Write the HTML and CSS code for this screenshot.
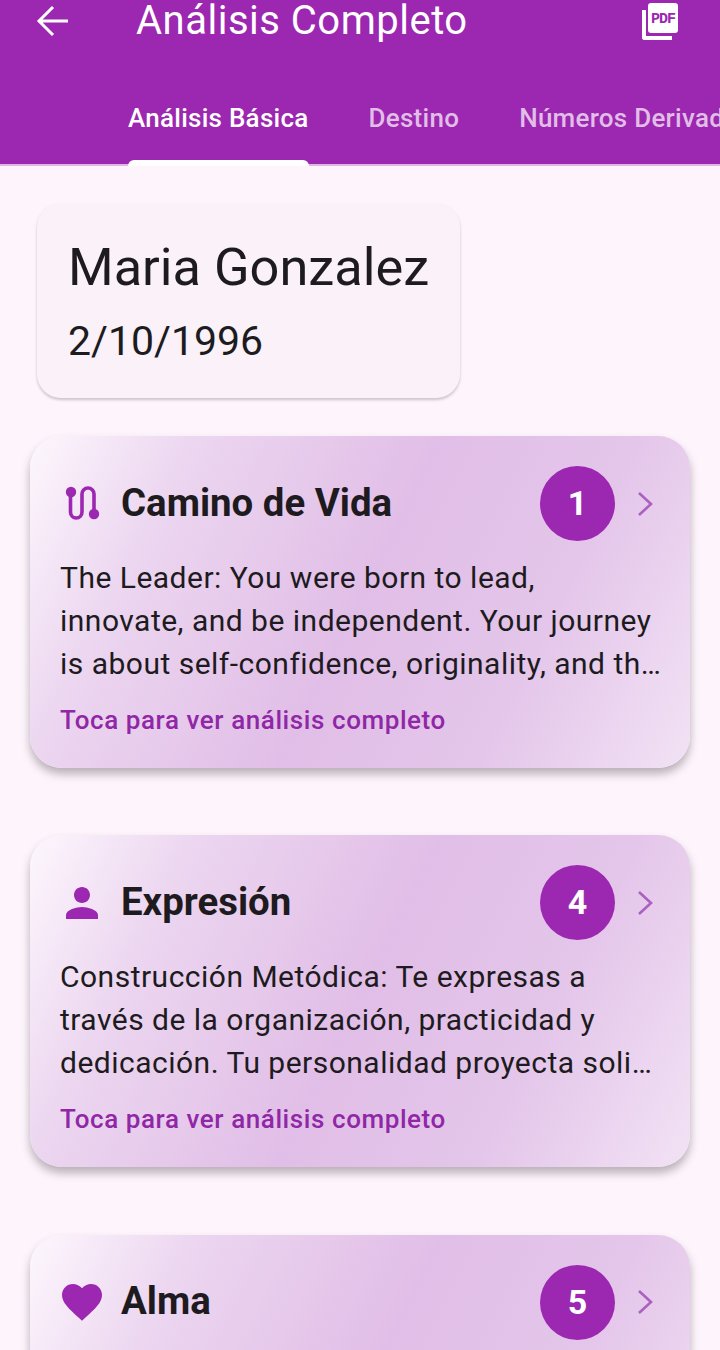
FILE: index.html
```html
<!DOCTYPE html>
<html lang="es">
<head>
<meta charset="utf-8">
<title>Análisis Completo</title>
<link rel="stylesheet" href="styles.css">
</head>
<body>
<header class="appbar">
  <div class="toolbar">
    <svg class="back" viewBox="0 0 24 24" width="48" height="48"><path d="M19.500 12H5M12 5l-7 7 7 7" fill="none" stroke="#fff" stroke-width="1.500"/></svg>
    <h1 class="title">Análisis Completo</h1>
    <div class="pdf">
      <span class="pdf-back"></span>
      <span class="pdf-front">PDF</span>
    </div>
  </div>
  <nav class="tabs">
    <span class="tab active">Análisis Básica</span>
    <span class="tab">Destino</span>
    <span class="tab">Números Derivados</span>
  </nav>
</header>
<main class="content">
  <section class="person">
    <div class="person-name">Maria Gonzalez</div>
    <div class="person-date">2/10/1996</div>
  </section>
  <article class="card">
    <div class="card-head">
      <svg class="icon" viewBox="0 0 48 48" width="48" height="48"><path d="M12.500 12v20a5.750 6 0 0 0 11.500 0V14a6 6 0 0 1 12 0v20" fill="none" stroke="#9c27b0" stroke-width="3.600"/><circle cx="13" cy="12" r="5.200" fill="#9c27b0"/><circle cx="36" cy="34" r="5.200" fill="#9c27b0"/></svg>
      <h2 class="card-title">Camino de Vida</h2>
      <span class="badge">1</span>
      <svg class="chev" viewBox="0 0 16 26" width="16" height="26"><path d="M2 2l12 11L2 24" fill="none" stroke="#ab61bf" stroke-width="2.600"/></svg>
    </div>
    <p class="card-text">The Leader: You were born to lead, innovate, and be independent. Your journey is about self-confidence, originality, and th…</p>
    <div class="card-hint">Toca para ver análisis completo</div>
  </article>
  <article class="card">
    <div class="card-head">
      <svg class="icon" viewBox="0 0 24 24" width="48" height="48"><path d="M12 12c2.210 0 4-1.790 4-4s-1.790-4-4-4-4 1.790-4 4 1.790 4 4 4zm0 2c-2.670 0-8 1.340-8 4v2h16v-2c0-2.660-5.330-4-8-4z" fill="#9c27b0"/></svg>
      <h2 class="card-title">Expresión</h2>
      <span class="badge">4</span>
      <svg class="chev" viewBox="0 0 16 26" width="16" height="26"><path d="M2 2l12 11L2 24" fill="none" stroke="#ab61bf" stroke-width="2.600"/></svg>
    </div>
    <p class="card-text">Construcción Metódica: Te expresas a través de la organización, practicidad y dedicación. Tu personalidad proyecta soli…</p>
    <div class="card-hint">Toca para ver análisis completo</div>
  </article>
  <article class="card">
    <div class="card-head">
      <svg class="icon" viewBox="0 0 24 24" width="48" height="48"><path d="M12 21.350l-1.450-1.320C5.400 15.360 2 12.280 2 8.500 2 5.420 4.420 3 7.500 3c1.740 0 3.410.810 4.500 2.090C13.090 3.810 14.760 3 16.500 3 19.580 3 22 5.420 22 8.500c0 3.780-3.400 6.860-8.550 11.540L12 21.350z" fill="#9c27b0"/></svg>
      <h2 class="card-title">Alma</h2>
      <span class="badge">5</span>
      <svg class="chev" viewBox="0 0 16 26" width="16" height="26"><path d="M2 2l12 11L2 24" fill="none" stroke="#ab61bf" stroke-width="2.600"/></svg>
    </div>
  </article>
</main>
</body>
</html>
```
FILE: styles.css
```css
* { box-sizing: border-box; }
html, body { margin: 0; padding: 0; }
body {
  width: 720px;
  height: 1350px;
  overflow: hidden;
  background: #fef4fc;
  font-family: Roboto, "Noto Sans", sans-serif;
  color: #1d1b20;
}
.appbar {
  height: 166px;
  background: #9c27b0;
  border-bottom: 2px solid #dfb6e6;
  display: flex;
  flex-direction: column;
}
.toolbar {
  height: 42px;
  display: flex;
  align-items: center;
  padding-left: 29px;
}
.back { flex: none; }
.title {
  margin: 0 0 0 59px;
  font-size: 40px;
  font-weight: 400;
  line-height: 40px;
  letter-spacing: 0.500px;
  color: #fff;
  white-space: nowrap;
  flex: 1;
}
.pdf {
  position: relative;
  width: 40px;
  height: 42px;
  margin-right: 40px;
  flex: none;
}
.pdf-back {
  position: absolute;
  left: 2px;
  top: 10px;
  width: 30px;
  height: 30px;
  border-left: 4px solid #fff;
  border-bottom: 4px solid #fff;
  border-bottom-left-radius: 3px;
}
.pdf-front {
  position: absolute;
  left: 8px;
  top: 3px;
  width: 30px;
  height: 30px;
  background: #fff;
  border-radius: 3px;
  color: #9c27b0;
  font-family: "Liberation Mono", monospace;
  font-size: 15px;
  font-weight: 700;
  line-height: 33px;
  text-align: center;
  letter-spacing: -1px;
}
.tabs {
  flex: 1;
  display: flex;
  gap: 60px;
  padding: 61px 0 0 128px;
  white-space: nowrap;
}
.tab {
  font-size: 26px;
  line-height: 30px;
  font-weight: 500;
  letter-spacing: 0.260px;
  color: #e1bee7;
  flex: none;
  height: 30px;
}
.tab.active {
  position: relative;
  color: #fff;
}
.tab.active::after {
  content: "";
  position: absolute;
  left: 0;
  right: 0;
  top: 57px;
  height: 6px;
  background: #fff;
  border-radius: 6px 6px 0 0;
}
.content {
  padding: 37px 30px 0;
  display: flex;
  flex-direction: column;
  align-items: flex-start;
}
.person {
  width: 423px;
  height: 195px;
  margin-left: 7px;
  padding: 32px 31px 0;
  background: #faf1f9;
  border-radius: 24px;
  box-shadow: 0 2px 3px rgba(0, 0, 0, 0.2);
}
.person-name {
  font-size: 52.300px;
  line-height: 64px;
  font-weight: 400;
  color: #1d1b20;
  white-space: nowrap;
}
.person-date {
  margin-top: 17px;
  font-size: 41px;
  line-height: 50px;
  color: #1d1b20;
}
.card {
  width: 660px;
  height: 332px;
  flex: none;
  margin-top: 38px;
  margin-bottom: 29.250px;
  padding: 30px 30px 0;
  border-radius: 32px;
  background: linear-gradient(116.700deg, #fdf7fd 0%, #ecd6f0 20%, #e1bee7 50%, #e4c6ea 74%, #f2e2f5 100%);
  box-shadow: 0 6px 10px rgba(0, 0, 0, 0.28);
}
.card-head {
  display: flex;
  align-items: center;
  height: 75px;
}
.icon { flex: none; margin-left: -2px; margin-right: 15px; }
.card-title {
  margin: 0 0 2px;
  flex: 1;
  font-size: 38.400px;
  line-height: 44px;
  font-weight: 700;
  color: #1d1b20;
  white-space: nowrap;
}
.badge {
  width: 75px;
  height: 75px;
  flex: none;
  border-radius: 50%;
  background: #9c27b0;
  color: #fff;
  font-size: 34px;
  font-weight: 700;
  line-height: 75px;
  text-align: center;
}
.chev { flex: none; margin-left: 22px; margin-right: 7px; }
.card-text {
  margin: 15px -6px 0 0;
  font-size: 30px;
  line-height: 43px;
  letter-spacing: 0.490px;
  color: #1d1b20;
}
.card-hint {
  margin-top: 20px;
  font-size: 26px;
  line-height: 30px;
  font-weight: 500;
  letter-spacing: 0.580px;
  color: #9027a6;
}
```
